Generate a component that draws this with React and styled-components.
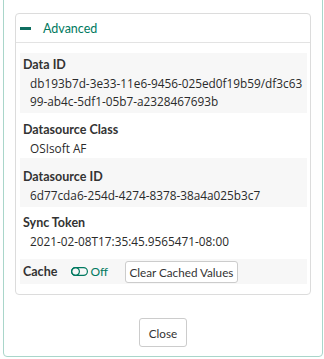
import styled, { createGlobalStyle } from 'styled-components'

const GlobalStyle = createGlobalStyle`
  body {
    margin: 0;
    font-family: Lato, "Open Sans", sans-serif;
    color: #333;
  }
`

const Scroller = styled.div`
  width: 324px;
  height: 359px;
  overflow-y: scroll;
  display: flex;
  flex-direction: column-reverse;

  &::-webkit-scrollbar {
    width: 7px;
  }
  &::-webkit-scrollbar-track {
    background: #ececec;
  }
  &::-webkit-scrollbar-thumb {
    background: #ababab;
    border-bottom: 2px solid #ececec;
  }
`

const Modal = styled.div`
  margin: 0 1px 2px 3px;
  border: 1px solid #a9d6ca;
  border-radius: 4px;
  background: #fff;
  flex-shrink: 0;
`

/* top of the dialog, scrolled out of view */
const ModalTop = styled.div`
  height: 104px;
`

const Body = styled.div`
  padding: 0 11px;
`

const Card = styled.section`
  border: 1px solid #dcdcdc;
  border-radius: 4px;
`

const CardHeader = styled.div`
  height: 28px;
  display: flex;
  align-items: center;
  padding-left: 4px;
  border-bottom: 1px solid #e3e3e3;
  color: #007960;
  font-size: 12.5px;
`

const Minus = styled.span`
  width: 11px;
  height: 3px;
  background: #0e6e60;
  margin-right: 12px;
  margin-top: 1px;
`

const CardBody = styled.div`
  padding: 10px 3px 10px 4px;
`

const Row = styled.div`
  box-sizing: border-box;
  height: ${p => p.$h}px;
  padding: ${p => p.$top}px 0 0 3px;
  background: ${p => (p.$striped ? '#f7f7f7' : 'transparent')};
`

const Label = styled.div`
  font-size: 12.5px;
  font-weight: 700;
  line-height: 18px;
  color: #333;
`

const Value = styled.div`
  font-family: "Open Sans", sans-serif;
  font-size: 11.8px;
  line-height: 18px;
  padding-left: 7px;
  color: #2a2a2a;
  word-break: break-all;
`

const CacheRow = styled.div`
  height: 25px;
  display: flex;
  align-items: center;
  padding-left: 3px;
  background: #f7f7f7;
`

const Toggle = styled.span`
  display: inline-flex;
  align-items: center;
  gap: 2px;
  margin-left: 14px;
  color: #007960;
  font-size: 12px;
  font-family: Lato, "Open Sans", sans-serif;
`

const Button = styled.button`
  font-family: Lato, "Open Sans", sans-serif;
  font-size: 11.7px;
  color: #333;
  background: #fff;
  border: 1px solid #ccc;
  border-radius: 3px;
  padding: 0;
  width: ${p => p.$w}px;
  height: ${p => p.$hgt}px;
  margin-left: ${p => p.$ml || 0}px;
`

const Footer = styled.div`
  display: flex;
  justify-content: center;
  padding: 23px 0 9px;
`

const ToggleOffIcon = () => (
  <svg width="17" height="9" viewBox="0 0 17 9" fill="none" stroke="currentColor" strokeWidth="1.2">
    <rect x="0.6" y="0.6" width="15.8" height="7.8" rx="3.9" />
    <circle cx="4.5" cy="4.5" r="3.9" />
  </svg>
)

const fields = [
  { label: 'Data ID', value: 'db193b7d-3e33-11e6-9456-025ed0f19b59/df3c6399-ab4c-5df1-05b7-a2328467693b', h: 60, top: 3, striped: true },
  { label: 'Datasource Class', value: 'OSIsoft AF', h: 45, top: 8 },
  { label: 'Datasource ID', value: '6d77cda6-254d-4274-8378-38a4a025b3c7', h: 49, top: 10, striped: true },
  { label: 'Sync Token', value: '2021-02-08T17:35:45.9565471-08:00', h: 52, top: 7 },
]

export default function App() {
  return (
    <>
      <GlobalStyle />
      <Scroller>
        <Modal>
          <ModalTop />
          <Body>
            <Card>
              <CardHeader>
                <Minus />
                Advanced
              </CardHeader>
              <CardBody>
                {fields.map(f => (
                  <Row key={f.label} $h={f.h} $top={f.top} $striped={f.striped}>
                    <Label>{f.label}</Label>
                    <Value>{f.value}</Value>
                  </Row>
                ))}
                <CacheRow>
                  <Label>Cache</Label>
                  <Toggle>
                    <ToggleOffIcon />
                    Off
                  </Toggle>
                  <Button $w={113} $hgt={22} $ml={17}>Clear Cached Values</Button>
                </CacheRow>
              </CardBody>
            </Card>
          </Body>
          <Footer>
            <Button $w={48} $hgt={29}>Close</Button>
          </Footer>
        </Modal>
      </Scroller>
    </>
  )
}
